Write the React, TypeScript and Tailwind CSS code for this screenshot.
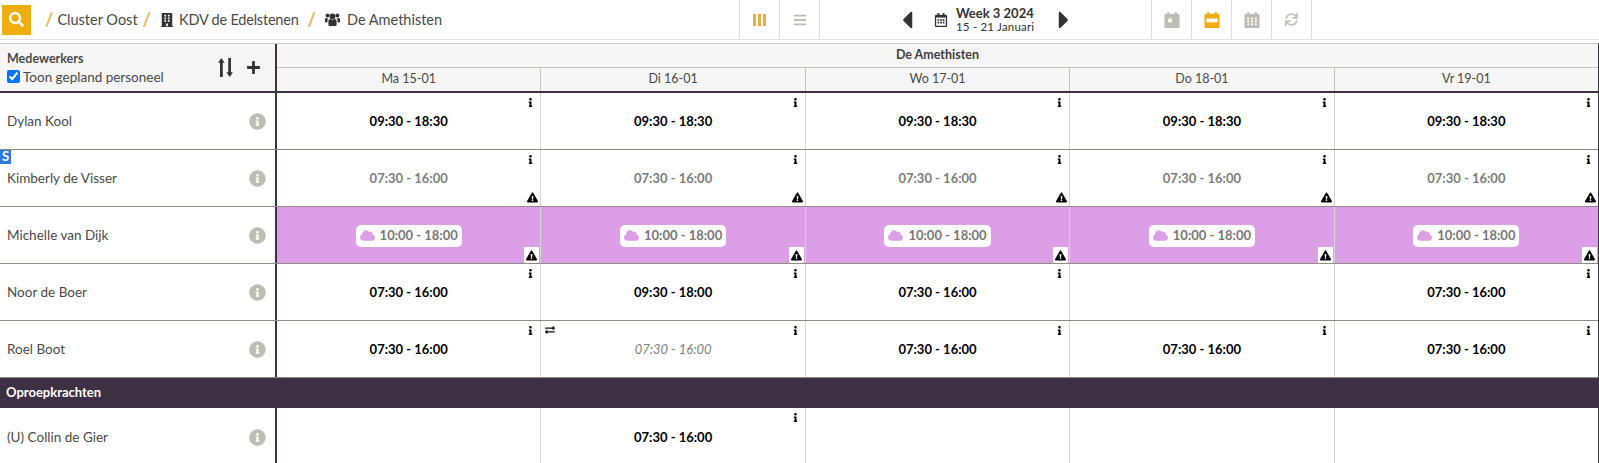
import React from 'react';
import { FaSearch, FaBuilding, FaInfoCircle, FaInfo, FaExclamationTriangle, FaCloud, FaExchangeAlt, FaCaretLeft, FaCaretRight, FaPlus, FaSync, FaBars, FaRegCalendarAlt } from 'react-icons/fa';

type Shift = {
  time?: string;
  kind?: 'plain' | 'grey' | 'cloud' | 'swap';
};

type Employee = {
  name: string;
  badge?: boolean;
  shifts: Shift[];
};

const days = ['Ma 15-01', 'Di 16-01', 'Wo 17-01', 'Do 18-01', 'Vr 19-01'];

const five = (time: string, kind: Shift['kind']): Shift[] => days.map(() => ({ time, kind }));

const employees: Employee[] = [
  { name: 'Dylan Kool', shifts: five('09:30 - 18:30', 'plain') },
  { name: 'Kimberly de Visser', badge: true, shifts: five('07:30 - 16:00', 'grey') },
  { name: 'Michelle van Dijk', shifts: five('10:00 - 18:00', 'cloud') },
  {
    name: 'Noor de Boer',
    shifts: [
      { time: '07:30 - 16:00', kind: 'plain' },
      { time: '09:30 - 18:00', kind: 'plain' },
      { time: '07:30 - 16:00', kind: 'plain' },
      {},
      { time: '07:30 - 16:00', kind: 'plain' },
    ],
  },
  {
    name: 'Roel Boot',
    shifts: [
      { time: '07:30 - 16:00', kind: 'plain' },
      { time: '07:30 - 16:00', kind: 'swap' },
      { time: '07:30 - 16:00', kind: 'plain' },
      { time: '07:30 - 16:00', kind: 'plain' },
      { time: '07:30 - 16:00', kind: 'plain' },
    ],
  },
];

const CalendarIcon: React.FC<{ variant: 'day' | 'week' | 'month'; color: string }> = ({ variant, color }) => (
  <svg width="16" height="17" viewBox="0 0 16 18">
    <path fill={color} d="M0 4a1 1 0 0 1 1-1h2V1h2v2h6V1h2v2h2a1 1 0 0 1 1 1v13a1 1 0 0 1-1 1H1a1 1 0 0 1-1-1z" />
    {variant === 'day' && <rect x="4" y="8" width="4" height="4" fill="#fff" />}
    {variant === 'week' && <rect x="2" y="8" width="12" height="4" fill="#fff" />}
    {variant === 'month' && (
      <g fill="#fff">
        {[3, 7, 11].map((x) => [7, 10, 13].map((y) => <rect key={`${x}-${y}`} x={x} y={y} width="2" height="2" />))}
      </g>
    )}
  </svg>
);

const UsersIcon = () => (
  <svg width="15" height="14" viewBox="0 0 15 14" fill="#333" className="ml-[9px]">
    <circle cx="7.5" cy="3.4" r="2.9" />
    <circle cx="2.6" cy="2.6" r="2" />
    <circle cx="12.4" cy="2.6" r="2" />
    <path d="M3.4 8.2c0-1.4 1-2.2 2-2.2.6.5 1.3.8 2.1.8s1.500-.3 2.100-.8c1 0 2 .8 2 2.200v3.300c0 1-.7 1.500-1.500 1.500H4.900c-.8 0-1.500-.5-1.500-1.500z" />
    <path d="M0 6.500C0 5.500.6 5 1.300 5c.4.300.9.500 1.500.500h.7c-.7.600-1.100 1.500-1.100 2.600v1.400H1c-.6 0-1-.4-1-1z" />
    <path d="M15 6.500c0-1-.6-1.500-1.300-1.500-.4.300-.9.500-1.500.500h-.7c.7.600 1.100 1.500 1.100 2.600v1.400H14c.6 0 1-.4 1-1z" />
  </svg>
);

const ToolCell: React.FC<{ children: React.ReactNode }> = ({ children }) => (
  <div className="flex h-full w-10 items-center justify-center border-r border-[#dcdcdc]">{children}</div>
);

const Slash = () => <span className="text-[18px] font-bold text-[#eeb45c]">/</span>;

const TopBar = () => (
  <div className="flex h-10 items-center border-b border-[#e2e2e2]">
    <div className="ml-[2px] flex h-[30px] w-[29px] items-center justify-center bg-[#f0ad0e] text-[15px] text-white">
      <FaSearch />
    </div>
    <div className="ml-[14px] flex w-[694px] items-center text-[14.5px] text-[#4a4a4a]">
      <Slash />
      <span className="ml-[4px]">Cluster Oost</span>
      <span className="ml-[5px]"><Slash /></span>
      <FaBuilding className="ml-[9px] text-[14px] text-[#333]" />
      <span className="ml-[5px] tracking-[-0.2px]">KDV de Edelstenen</span>
      <span className="ml-[9px]"><Slash /></span>
      <UsersIcon />
      <span className="ml-[7px]">De Amethisten</span>
    </div>
    <div className="flex h-full items-center border-l border-[#dcdcdc]">
      <ToolCell>
        <div className="flex gap-[2px]">
          <span className="h-[12px] w-[3px] bg-[#f0ad3e]" />
          <span className="h-[12px] w-[3px] bg-[#f0ad3e]" />
          <span className="h-[12px] w-[3px] bg-[#f0ad3e]" />
        </div>
      </ToolCell>
      <ToolCell>
        <FaBars className="text-[14px] text-[#bdbdb5]" />
      </ToolCell>
    </div>
    <div className="flex h-full w-[332px] items-center justify-center border-r border-[#dcdcdc] text-[#333]">
      <FaCaretLeft className="ml-[2px] text-[28px]" />
      <FaRegCalendarAlt className="ml-[13px] text-[14px]" />
      <div className="ml-[8px] flex w-[80px] flex-col leading-[13px]">
        <span className="text-[13px] font-bold">Week 3 2024</span>
        <span className="text-[11.5px] tracking-[0.2px]">15 - 21 Januari</span>
      </div>
      <FaCaretRight className="ml-[14px] mr-[2px] text-[28px]" />
    </div>
    <ToolCell><CalendarIcon variant="day" color="#bdbdb5" /></ToolCell>
    <ToolCell><CalendarIcon variant="week" color="#f0ad0e" /></ToolCell>
    <ToolCell><CalendarIcon variant="month" color="#bdbdb5" /></ToolCell>
    <ToolCell><FaSync className="text-[13px] text-[#c4c4bc]" /></ToolCell>
  </div>
);

const ShiftCell: React.FC<{ shift: Shift; last: boolean }> = ({ shift, last }) => {
  const { time, kind } = shift;
  const cloud = kind === 'cloud';
  return (
    <div
      className={`relative flex flex-1 items-center justify-center pt-[1px] border-[#d5d5d5] ${last ? '' : 'border-r'} ${
        cloud ? 'bg-[#dc9ee6] border-[#c9c9c9]' : ''
      }`}
    >
      {time && !cloud && (
        <span
          className={
            kind === 'plain'
              ? 'text-[13px] font-bold text-black'
              : kind === 'grey'
                ? 'text-[13px] font-bold text-[#7d7d7d]'
                : 'text-[13px] italic text-[#808080]'
          }
        >
          {time}
        </span>
      )}
      {cloud && (
        <span className="flex h-[22px] items-center gap-[5px] rounded-[5px] bg-white px-[4px] text-[13px] font-bold text-[#777]">
          <FaCloud className="text-[15px] text-[#dc9ee6]" />
          {time}
        </span>
      )}
      {time && !cloud && <FaInfo className="absolute right-[5px] top-[5px] text-[9px] text-black" />}
      {kind === 'swap' && <FaExchangeAlt className="absolute left-[4px] top-[4px] text-[10px] text-[#111]" />}
      {kind === 'grey' && <FaExclamationTriangle className="absolute bottom-[3px] right-[2px] text-[11px] text-black" />}
      {cloud && (
        <span className="absolute bottom-0 right-[1px] flex h-[16px] w-[15px] items-center justify-center bg-white">
          <FaExclamationTriangle className="text-[11px] text-black" />
        </span>
      )}
    </div>
  );
};

const NameCell: React.FC<{ name: string; badge?: boolean }> = ({ name, badge }) => (
  <div className="relative flex w-[277px] shrink-0 items-center justify-between border-r-[2px] border-[#3d3044] pl-[7px] pr-[9px] text-[13.5px] text-[#4a4a4a]">
    {badge && (
      <span className="absolute left-0 top-0 flex h-[14px] w-[11px] items-center justify-center bg-[#2f7ae0] text-[13px] font-bold text-white">
        S
      </span>
    )}
    <span>{name}</span>
    <FaInfoCircle className="text-[17px] text-[#bdbdb5]" />
  </div>
);

export default function App() {
  return (
    <div className="h-[463px] w-[1599px] overflow-hidden bg-white font-['Lato','Noto_Sans',sans-serif]">
      <TopBar />
      <div className="mt-[3px] border-t border-[#c8c8c8] border-r border-r-[#3d3044]">
        {/* header */}
        <div className="flex h-[49px] border-b-2 border-[#3d3044] bg-[#f6f6f6]">
          <div className="flex w-[277px] shrink-0 items-center justify-between border-r-[2px] border-[#3d3044] pl-[7px] pr-[14px]">
            <div className="flex flex-col text-[#4a4a4a]">
              <span className="text-[12.5px] font-bold leading-[18px]">Medewerkers</span>
              <label className="flex items-center gap-[3px] text-[13.5px] leading-[18px]">
                <input type="checkbox" defaultChecked className="m-0 h-[13px] w-[13px] accent-[#0075ff]" />
                Toon gepland personeel
              </label>
            </div>
            <div className="flex items-center gap-[13px] text-[#333]">
              <svg width="15" height="19" viewBox="0 0 14 18" fill="currentColor">
                <path d="M3 0l3.200 4.400H4.400V18H1.800V4.400H0z" />
                <path d="M11 18l-3.200-4.400h1.800V0h2.600v13.600h1.800z" />
              </svg>
              <FaPlus className="text-[15px]" />
            </div>
          </div>
          <div className="flex flex-1 flex-col">
            <div className="flex h-[24px] items-center justify-center border-b border-[#c4c4bc] text-[12.5px] font-bold text-[#3f3f3f]">
              De Amethisten
            </div>
            <div className="flex flex-1">
              {days.map((day, i) => (
                <div
                  key={day}
                  className={`flex flex-1 items-center justify-center border-[#c4c4bc] text-[12.5px] text-[#4a4a4a] ${
                    i < 4 ? 'border-r' : ''
                  }`}
                >
                  {day}
                </div>
              ))}
            </div>
          </div>
        </div>

        {employees.map((emp) => (
          <div key={emp.name} className="flex h-[57px] border-b border-[#8d8d85]">
            <NameCell name={emp.name} badge={emp.badge} />
            <div className="flex flex-1">
              {emp.shifts.map((s, i) => (
                <ShiftCell key={i} shift={s} last={i === 4} />
              ))}
            </div>
          </div>
        ))}

        <div className="flex h-[30px] items-center bg-[#3d3044] pl-[6px] text-[13px] font-bold text-white">
          Oproepkrachten
        </div>

        <div className="flex h-[58px]">
          <NameCell name="(U) Collin de Gier" />
          <div className="flex flex-1">
            <ShiftCell shift={{}} last={false} />
            <ShiftCell shift={{ time: '07:30 - 16:00', kind: 'plain' }} last={false} />
            <ShiftCell shift={{}} last={false} />
            <ShiftCell shift={{}} last={false} />
            <ShiftCell shift={{}} last />
          </div>
        </div>
      </div>
    </div>
  );
}
